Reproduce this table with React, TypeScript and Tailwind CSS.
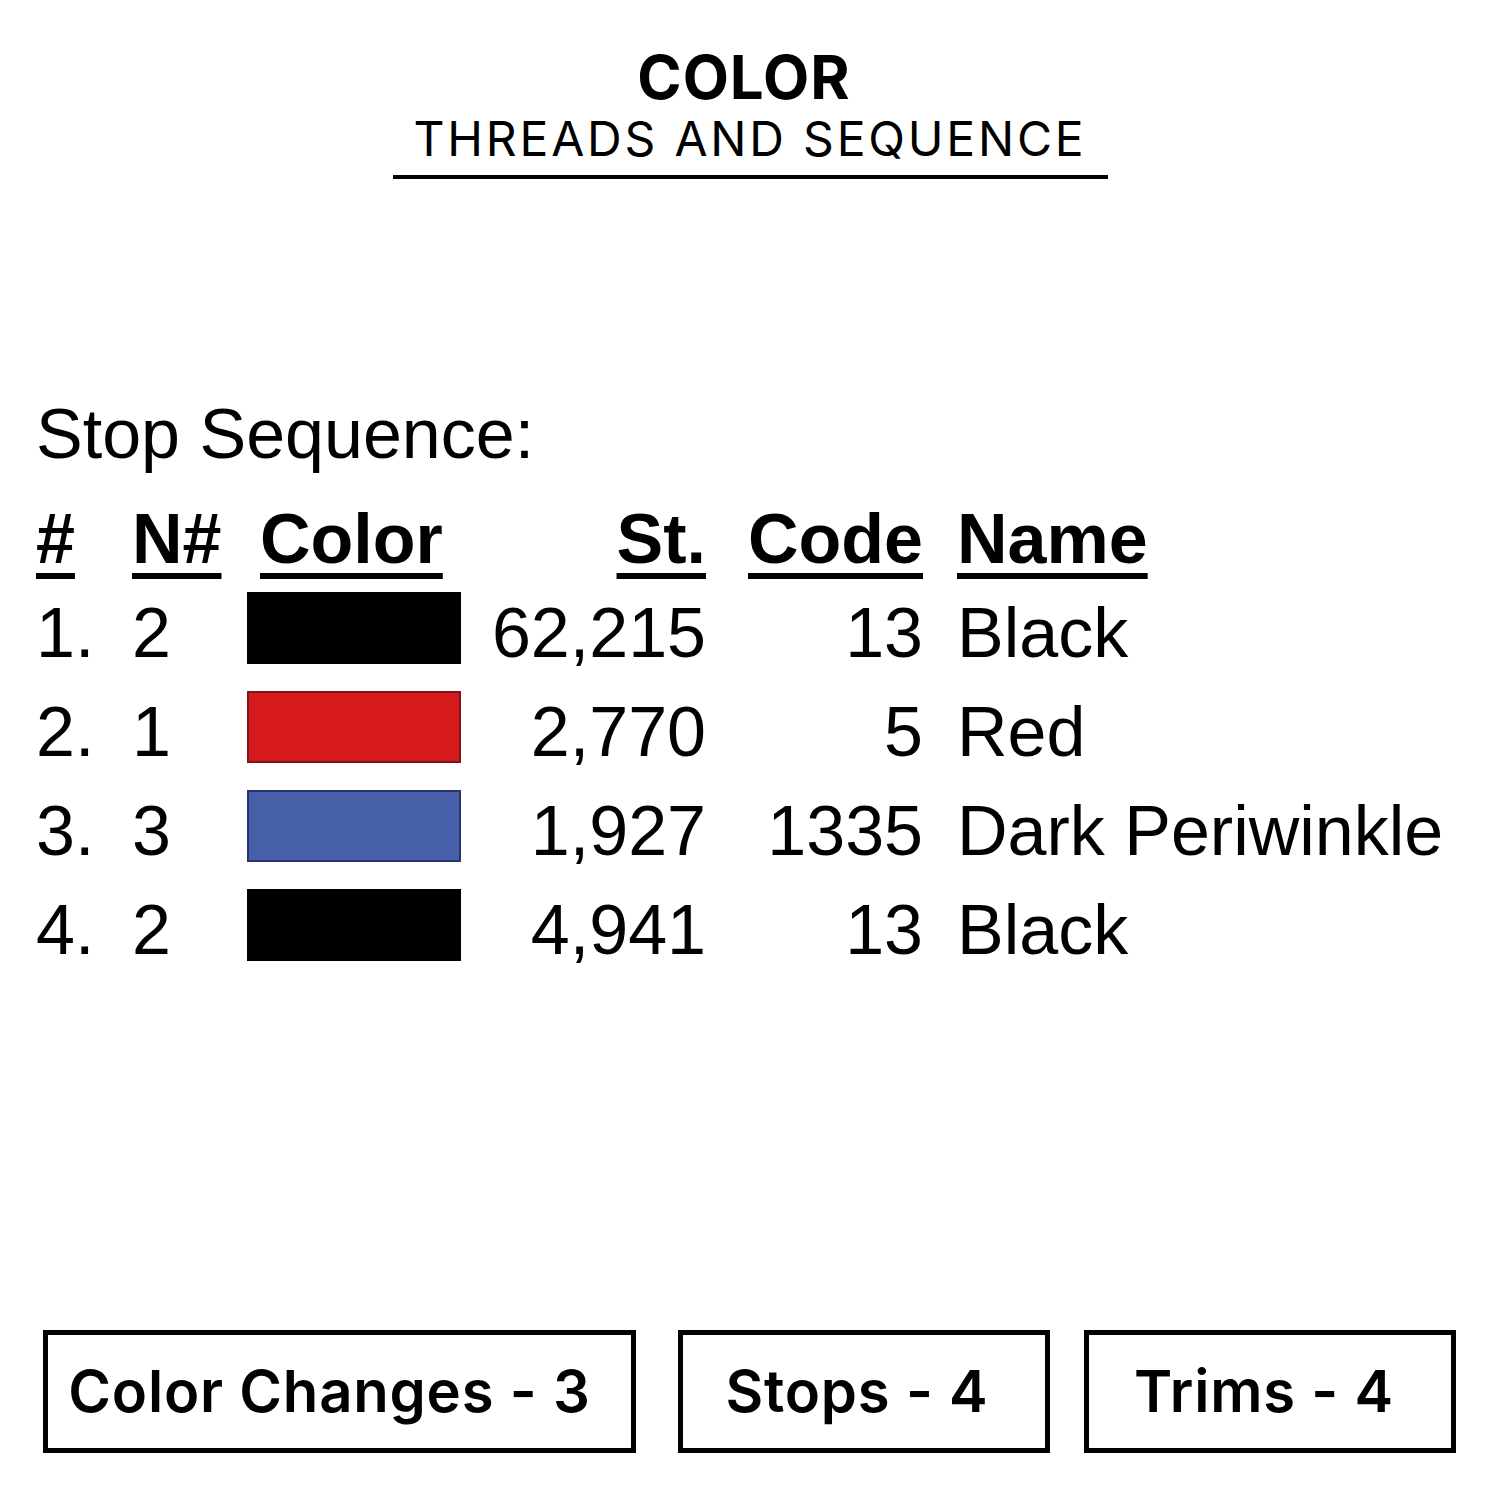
const rows = [
  { n: "1.", nn: "2", sw: "bg-black border-black", st: "62,215", code: "13", name: "Black" },
  { n: "2.", nn: "1", sw: "bg-[#d6191c] border-[#7d1616]", st: "2,770", code: "5", name: "Red" },
  { n: "3.", nn: "3", sw: "bg-[#465fa8] border-[#26356e]", st: "1,927", code: "1335", name: "Dark Periwinkle" },
  { n: "4.", nn: "2", sw: "bg-black border-black", st: "4,941", code: "13", name: "Black" },
];

const grid = "grid grid-cols-[96px_114px_228px_232px_217px_1fr]";
const ul = "underline decoration-[6px] underline-offset-[10px]";

export default function App() {
  return (
    <div className="w-[1500px] h-[1500px] bg-white text-black flex flex-col">
      <div className="flex flex-col items-center pt-[47px] font-['Inter',sans-serif]">
        <div className="text-[60px] leading-none font-bold tracking-[1px] mr-[12px]">COLOR</div>
        <div className="mt-[8px] text-[48px] leading-none font-normal tracking-[2.8px]">THREADS AND SEQUENCE</div>
        <div className="mt-[12px] h-[4px] w-[715px] bg-black" />
      </div>

      <div className="mt-[220px] pl-[36px] font-['Liberation_Sans',Arial,sans-serif] text-[70px]">
        <div className="leading-[70px]">Stop Sequence:</div>
        <div className={`${grid} mt-[24.5px] leading-[90px] font-bold`}>
          <div><span className={ul}>#</span></div>
          <div><span className={ul}>N#</span></div>
          <div className="pl-[14px]"><span className={ul}>Color</span></div>
          <div className="text-right"><span className={ul}>St.</span></div>
          <div className="text-right"><span className={ul}>Code</span></div>
          <div className="pl-[34px]"><span className={ul}>Name</span></div>
        </div>
        {rows.map((r, i) => (
          <div key={i} className={`${grid} leading-[99px] items-start`}>
            <div>{r.n}</div>
            <div>{r.nn}</div>
            <div className="pl-[1px] pt-[8px]">
              <div className={`w-[214px] h-[72px] border-2 ${r.sw}`} />
            </div>
            <div className="text-right">{r.st}</div>
            <div className="text-right">{r.code}</div>
            <div className="pl-[34px] whitespace-nowrap">{r.name}</div>
          </div>
        ))}
      </div>

      <div className="mt-auto pb-[47px] pl-[43px] flex font-['Inter',sans-serif] font-semibold text-[58px] tracking-[0.8px]">
        <div className="w-[593px] h-[123px] border-[5px] border-black flex items-center justify-center pr-[20px]">Color Changes - 3</div>
        <div className="ml-[42px] w-[372px] h-[123px] border-[5px] border-black flex items-center justify-center pr-[14px]">Stops - 4</div>
        <div className="ml-[34px] w-[372px] h-[123px] border-[5px] border-black flex items-center justify-center pr-[12px]">Trims - 4</div>
      </div>
    </div>
  );
}
